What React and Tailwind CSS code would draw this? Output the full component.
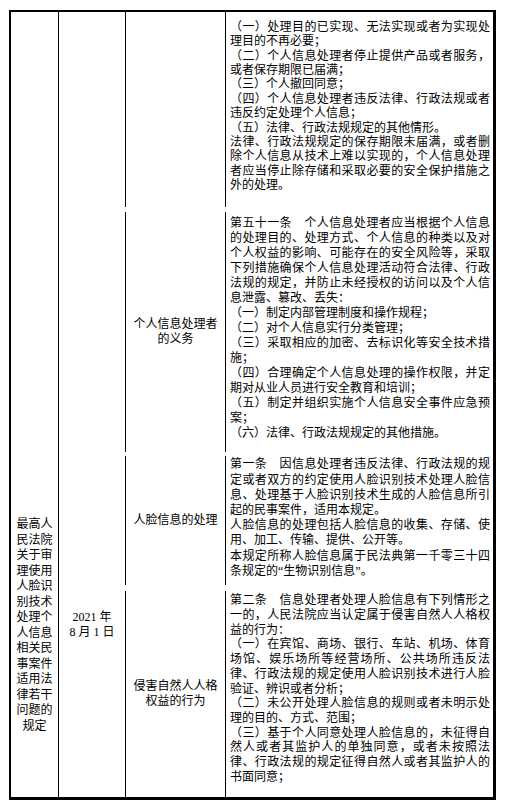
import React from "react";

const row1 = [
  ["（一）处理目的已实现、无法实现或者为实现处", "理目的不再必要；"],
  ["（二）个人信息处理者停止提供产品或者服务，", "或者保存期限已届满；"],
  ["（三）个人撤回同意；"],
  ["（四）个人信息处理者违反法律、行政法规或者", "违反约定处理个人信息；"],
  ["（五）法律、行政法规规定的其他情形。"],
  [
    "法律、行政法规规定的保存期限未届满，或者删",
    "除个人信息从技术上难以实现的，个人信息处理",
    "者应当停止除存储和采取必要的安全保护措施之",
    "外的处理。",
  ],
];

const row2 = [
  [
    "第五十一条\u3000个人信息处理者应当根据个人信息",
    "的处理目的、处理方式、个人信息的种类以及对",
    "个人权益的影响、可能存在的安全风险等，采取",
    "下列措施确保个人信息处理活动符合法律、行政",
    "法规的规定，并防止未经授权的访问以及个人信",
    "息泄露、篡改、丢失：",
  ],
  ["（一）制定内部管理制度和操作规程；"],
  ["（二）对个人信息实行分类管理；"],
  ["（三）采取相应的加密、去标识化等安全技术措", "施；"],
  ["（四）合理确定个人信息处理的操作权限，并定", "期对从业人员进行安全教育和培训；"],
  ["（五）制定并组织实施个人信息安全事件应急预", "案；"],
  ["（六）法律、行政法规规定的其他措施。"],
];

const row3 = [
  [
    "第一条\u3000因信息处理者违反法律、行政法规的规",
    "定或者双方的约定使用人脸识别技术处理人脸信",
    "息、处理基于人脸识别技术生成的人脸信息所引",
    "起的民事案件，适用本规定。",
  ],
  ["人脸信息的处理包括人脸信息的收集、存储、使", "用、加工、传输、提供、公开等。"],
  ["本规定所称人脸信息属于民法典第一千零三十四", "条规定的“生物识别信息”。"],
];

const row4 = [
  [
    "第二条\u3000信息处理者处理人脸信息有下列情形之",
    "一的，人民法院应当认定属于侵害自然人人格权",
    "益的行为：",
  ],
  [
    "（一）在宾馆、商场、银行、车站、机场、体育",
    "场馆、娱乐场所等经营场所、公共场所违反法",
    "律、行政法规的规定使用人脸识别技术进行人脸",
    "验证、辨识或者分析；",
  ],
  ["（二）未公开处理人脸信息的规则或者未明示处", "理的目的、方式、范围；"],
  [
    "（三）基于个人同意处理人脸信息的，未征得自",
    "然人或者其监护人的单独同意，或者未按照法",
    "律、行政法规的规定征得自然人或者其监护人的",
    "书面同意；",
  ],
];

const titleLines = [
  "最高人", "民法院", "关于审", "理使用", "人脸识", "别技术", "处理个",
  "人信息", "相关民", "事案件", "适用法", "律若干", "问题的", "规定",
];

function Paragraphs({ paras }) {
  return (
    <>
      {paras.map((p, i) => (
        <div key={i}>
          {p.map((line, j) =>
            j < p.length - 1 ? (
              <div key={j} className="text-justify [text-align-last:justify]">
                {line}
              </div>
            ) : (
              <div key={j} className="text-left">
                {line}
              </div>
            )
          )}
        </div>
      ))}
    </>
  );
}

function Label({ lines }) {
  return (
    <div className="w-[100px] shrink-0 border-l border-black flex flex-col justify-center items-center text-center leading-[15px]">
      {lines.map((l, i) => (
        <div key={i}>{l}</div>
      ))}
    </div>
  );
}

export default function App() {
  return (
    <div className="w-[506px] h-[810px] overflow-hidden bg-white text-black text-[12px] font-['Liberation_Serif','Noto_Sans_CJK_SC',serif]">
      <div className="ml-[9px] mt-[10px] w-[487px] flex border-t-2 border-l-2 border-r-[3px] border-b-[3px] border-black">
        <div className="w-[47px] shrink-0 pt-[505px] text-center leading-[15.5px]">
          {titleLines.map((l, i) => (
            <div key={i}>{l}</div>
          ))}
        </div>
        <div className="w-[67px] shrink-0 border-l border-black pt-[598px] text-center leading-[15px]">
          <div>2021 年</div>
          <div>8 月 1 日</div>
        </div>
        <div className="flex-1 flex flex-col">
          <div className="flex">
            <Label lines={[]} />
            <div className="flex-1 border-l border-black pl-[4px] pr-[3px] pt-[7.8px] pb-[14.4px] leading-[14.4px]">
              <Paragraphs paras={row1} />
            </div>
          </div>
          <div className="flex mt-[5px]">
            <Label lines={["个人信息处理者", "的义务"]} />
            <div className="flex-1 border-l border-black pl-[4px] pr-[3px] pt-[3.5px] pb-[11.5px] leading-[15px]">
              <Paragraphs paras={row2} />
            </div>
          </div>
          <div className="flex mt-[4px]">
            <Label lines={["人脸信息的处理"]} />
            <div className="flex-1 border-l border-black pl-[4px] pr-[3px] pt-[1.4px] pb-[6px] leading-[15.2px]">
              <Paragraphs paras={row3} />
            </div>
          </div>
          <div className="flex mt-[6px]">
            <Label lines={["侵害自然人人格", "权益的行为"]} />
            <div className="flex-1 border-l border-black pl-[4px] pr-[3px] pt-[2.4px] pb-[12.9px] leading-[14.67px]">
              <Paragraphs paras={row4} />
            </div>
          </div>
        </div>
      </div>
    </div>
  );
}
